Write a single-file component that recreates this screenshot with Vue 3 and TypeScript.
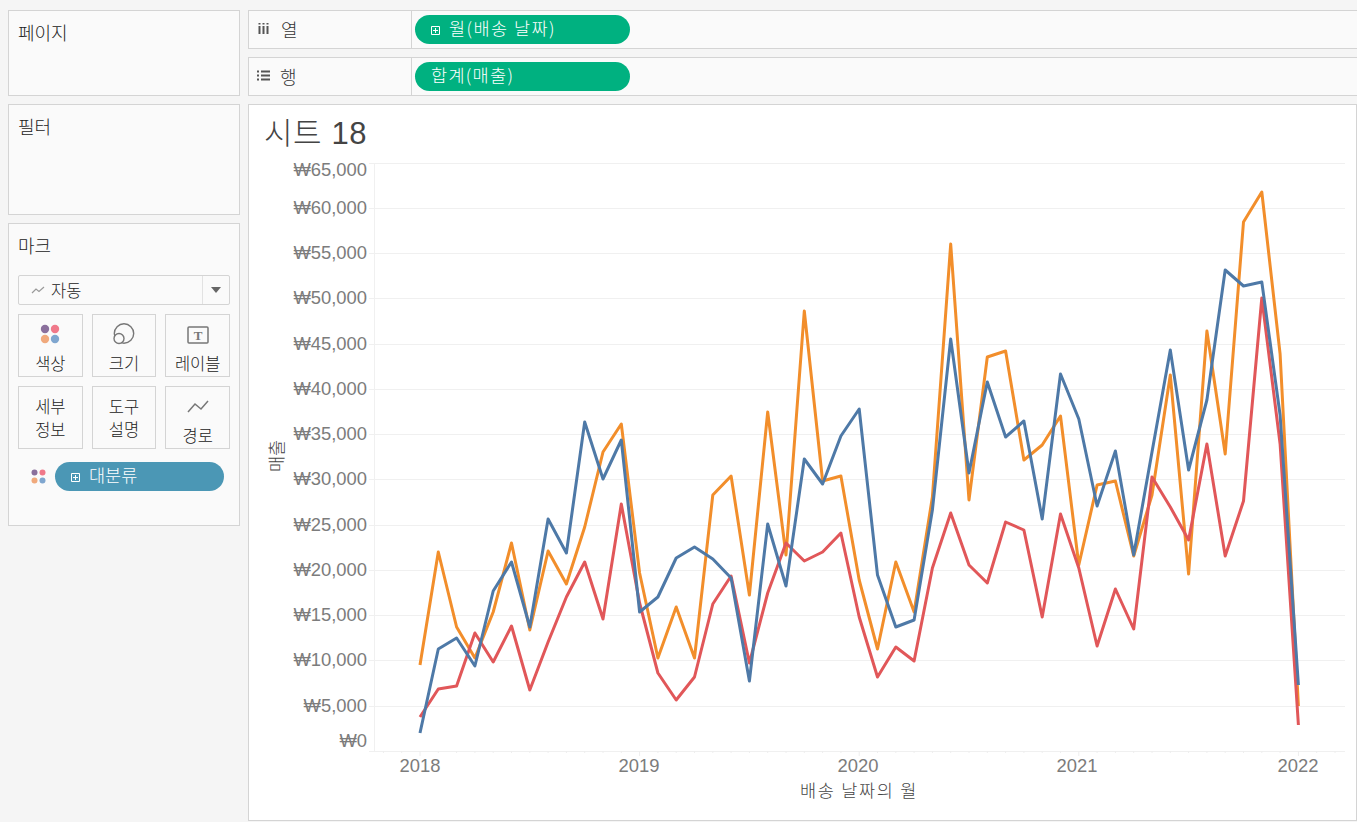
<script setup lang="ts">
const xs: number[] = Array.from({ length: 49 }, (_, i) => 420 + i * 18.3)
const orangeY = [665,552,627,658,612,543,630,551,584,527,452,424,573,658,607,658,495,476,595,412,555,311,481,476,580,649,562,612,497,244,500,357,351,460,445,416,565,485,481,556,495,375,574,331,454,222,192,354,706]
const blueY = [733,649,638,666,591,562,627,519,553,422,479,440,612,597,558,547,559,578,681,524,586,459,484,436,409,575,627,620,510,339,473,382,437,421,519,374,419,506,451,555,452,350,470,400,270,286,282,415,685]
const redY = [717,689,686,633,662,626,690,642,597,562,619,504,603,673,700,677,604,576,663,593,543,561,552,533,617,677,647,661,568,513,565,583,522,530,617,514,568,646,589,629,477,507,540,444,556,501,298,444,725]
const pts = (ys: number[]): string => ys.map((y, i) => `${xs[i].toFixed(1)},${y}`).join(' ')
const series = [
  { color: '#f28e2b', points: pts(orangeY) },
  { color: '#e15759', points: pts(redY) },
  { color: '#4e79a7', points: pts(blueY) },
]
const gridYs = [163, 208, 253, 298, 344, 389, 434, 479, 525, 570, 615, 660, 706, 751]
const yLabels = [
  { t: '₩65,000', y: 170 }, { t: '₩60,000', y: 208 }, { t: '₩55,000', y: 253 }, { t: '₩50,000', y: 298 },
  { t: '₩45,000', y: 344 }, { t: '₩40,000', y: 389 }, { t: '₩35,000', y: 434 }, { t: '₩30,000', y: 479 },
  { t: '₩25,000', y: 525 }, { t: '₩20,000', y: 570 }, { t: '₩15,000', y: 615 }, { t: '₩10,000', y: 660 },
  { t: '₩5,000', y: 706 }, { t: '₩0', y: 741 },
]
const xLabels = [
  { t: '2018', x: 420 }, { t: '2019', x: 639 }, { t: '2020', x: 858 }, { t: '2021', x: 1077 }, { t: '2022', x: 1298 },
]
const ticks: { x: number; len: number }[] = Array.from({ length: 53 }, (_, i) => {
  const m = i - 2
  return { x: 420 + m * 18.3, len: m % 12 === 0 ? 5 : 2 }
})
</script>

<template>
  <div class="app">
    <aside class="side">
      <section class="card pages"><h3>페이지</h3></section>
      <section class="card filters"><h3>필터</h3></section>
      <section class="card marks">
        <h3>마크</h3>
        <div class="select">
          <span class="sel-main">
            <svg width="16" height="10" viewBox="0 0 16 10"><path d="M1 8 L5 4 L8 6.5 L13 2" fill="none" stroke="#9a9a9a" stroke-width="1.2"/></svg>
            자동
          </span>
          <span class="sel-arrow"><i></i></span>
        </div>
        <div class="btns">
          <div class="btn">
            <svg class="ico" width="22" height="22" viewBox="0 0 22 22">
              <circle cx="6" cy="6" r="4.2" fill="#8a6f9c"/><circle cx="16" cy="6" r="4.2" fill="#f0798a"/>
              <circle cx="6" cy="16" r="4.2" fill="#f0a97c"/><circle cx="16" cy="16" r="4.2" fill="#7fa6cf"/>
            </svg>
            <span>색상</span>
          </div>
          <div class="btn">
            <svg class="ico" width="22" height="22" viewBox="0 0 22 22">
              <circle cx="11" cy="10.5" r="9.7" fill="none" stroke="#777" stroke-width="1.4"/>
              <circle cx="6" cy="15.5" r="5" fill="#fafafa" stroke="#777" stroke-width="1.4"/>
            </svg>
            <span>크기</span>
          </div>
          <div class="btn">
            <svg class="ico" width="22" height="20" viewBox="0 0 22 20">
              <rect x="1" y="2" width="20" height="16" rx="1" fill="none" stroke="#777" stroke-width="1.5"/>
              <text x="11" y="14.5" text-anchor="middle" class="t-ico">T</text>
            </svg>
            <span>레이블</span>
          </div>
          <div class="btn two"><span>세부<br />정보</span></div>
          <div class="btn two"><span>도구<br />설명</span></div>
          <div class="btn path">
            <svg class="ico" width="22" height="14" viewBox="0 0 22 14">
              <path d="M1 12 L8 4 L14 9 L21 1" fill="none" stroke="#777" stroke-width="1.5"/>
            </svg>
            <span>경로</span>
          </div>
        </div>
        <div class="color-row">
          <svg width="15" height="15" viewBox="0 0 15 15">
            <circle cx="3.5" cy="3.5" r="3" fill="#8a6f9c"/><circle cx="11.5" cy="3.5" r="3" fill="#f0798a"/>
            <circle cx="3.5" cy="11.5" r="3" fill="#f0a97c"/><circle cx="11.5" cy="11.5" r="3" fill="#7fa6cf"/>
          </svg>
          <div class="pill blue">
            <svg class="plus" width="9" height="9" viewBox="0 0 9 9"><path d="M.5.5h8v8h-8zM2 4.5h5M4.5 2v5" fill="none" stroke="#fff" stroke-width="1"/></svg>
            대분류
          </div>
        </div>
      </section>
    </aside>
    <main class="main">
      <div class="shelf">
        <div class="shelf-label">
          <svg width="11" height="11" viewBox="0 0 11 11"><path d="M1.5 3v8M5.5 3v8M9.5 3v8M1.5 0v1.6M5.5 0v1.6M9.5 0v1.6" stroke="#555" stroke-width="2" fill="none"/></svg>
          <span>열</span>
        </div>
        <div class="shelf-body">
          <div class="pill green date">
            <svg class="plus" width="9" height="9" viewBox="0 0 9 9"><path d="M.5.5h8v8h-8zM2 4.5h5M4.5 2v5" fill="none" stroke="#fff" stroke-width="1"/></svg>
            월(배송 날짜)
          </div>
        </div>
      </div>
      <div class="shelf">
        <div class="shelf-label rows">
          <svg width="13" height="11" viewBox="0 0 13 11"><path d="M0 1.5h2M4 1.5h9M0 5.5h2M4 5.5h9M0 9.5h2M4 9.5h9" stroke="#555" stroke-width="2" fill="none"/></svg>
          <span>행</span>
        </div>
        <div class="shelf-body">
          <div class="pill green sum">합계(매출)</div>
        </div>
      </div>
      <section class="view">
        <h1 class="title">시트 18</h1>
        <svg class="chart" viewBox="249 150 1107 670" width="1107" height="670">
          <line x1="374.5" x2="374.5" y1="163" y2="751" class="grid" />
          <line v-for="y in gridYs" :key="y" x1="369" x2="1345" :y1="y + 0.5" :y2="y + 0.5" class="grid" />
          <line v-for="t in ticks" :key="t.x" :x1="t.x" :x2="t.x" y1="751" :y2="751 + t.len" class="tick" />
          <polyline v-for="s in series" :key="s.color" :points="s.points" fill="none" :stroke="s.color" stroke-width="3" stroke-linejoin="round" />
          <text v-for="l in yLabels" :key="l.t" x="367" :y="l.y + 6" text-anchor="end" class="axis y">{{ l.t }}</text>
          <text v-for="l in xLabels" :key="l.t" :x="l.x" y="772" text-anchor="middle" class="axis">{{ l.t }}</text>
          <text x="859" y="797" text-anchor="middle" class="axis-title x">배송 날짜의 월</text>
          <text transform="translate(283 456) rotate(-90)" text-anchor="middle" class="axis-title">매출</text>
        </svg>
      </section>
    </main>
  </div>
</template>

<style>
html, body { margin: 0; background: #f5f5f5; overflow: hidden; }
</style>

<style scoped>
.app {
  display: grid;
  grid-template-columns: 232px 1109px;
  column-gap: 8px;
  width: 1357px;
  height: 822px;
  box-sizing: border-box;
  padding: 10px 0 0 8px;
  background: #f5f5f5;
  font-family: "Noto Sans CJK KR", "Noto Sans", sans-serif;
  font-weight: 300;
  color: #222;
  overflow: hidden;
}
.side, .main { display: flex; flex-direction: column; gap: 8px; }
.card {
  box-sizing: border-box;
  background: #fafafa;
  border: 1px solid #d4d4d4;
  padding: 9px 9px;
}
.card h3 { margin: 0; font-size: 18px; font-weight: 300; line-height: 25px; color: #222; }
.pages { height: 86px; }
.filters { height: 111px; }
.marks { height: 303px; }
.select {
  display: flex;
  height: 30px;
  margin-top: 17px;
  box-sizing: border-box;
  border: 1px solid #d4d4d4;
  border-radius: 2px;
  font-size: 16.5px;
}
.sel-main { flex: 1; display: flex; align-items: center; gap: 4px; padding-left: 12px; }
.sel-arrow { width: 26px; border-left: 1px solid #e2e2e2; display: flex; align-items: center; justify-content: center; }
.sel-arrow i { width: 0; height: 0; border: 5px solid transparent; border-top: 6px solid #666; border-bottom: 0; }
.btns { display: grid; grid-template-columns: repeat(3, 1fr); gap: 9px; margin-top: 9px; }
.btn {
  box-sizing: border-box;
  height: 63px;
  border: 1px solid #d4d4d4;
  display: flex;
  flex-direction: column;
  align-items: center;
  justify-content: flex-end;
  text-align: center;
  font-size: 16.5px;
  line-height: 23px;
  padding-bottom: 1px;
}
.btn .ico { margin-bottom: 7px; }
.btn.two { justify-content: center; padding-bottom: 0; }
.btn.path .ico { margin-bottom: 10px; }
.t-ico { font-family: "Liberation Serif", serif; font-size: 13px; font-weight: 700; fill: #777; }
.color-row { display: flex; align-items: center; gap: 9px; margin-top: 13px; padding-left: 13px; }
.pill {
  box-sizing: border-box;
  height: 29px;
  border-radius: 15px;
  color: #fff;
  font-size: 17.5px;
  line-height: 26px;
  display: flex;
  align-items: flex-start;
  gap: 9px;
  padding-left: 16px;
}
.plus { margin-top: 11px; flex: none; }
.blue { background: #4b97b5; width: 169px; }
.green { background: #00b180; width: 215px; }
.date { letter-spacing: 1.45px; }
.sum { padding-left: 16px; letter-spacing: 1.3px; }
.shelf {
  display: flex;
  height: 39px;
  margin-right: -2px;
  box-sizing: border-box;
  background: #fafafa;
  border: 1px solid #d4d4d4;
}
.shelf-label {
  box-sizing: border-box;
  width: 163px;
  border-right: 1px solid #d4d4d4;
  display: flex;
  align-items: center;
  gap: 12px;
  padding-left: 9px;
  padding-bottom: 2px;
  font-size: 18px;
  color: #333;
}
.shelf-label.rows { gap: 10px; padding-left: 8px; }
.shelf-body { padding: 4px 0 0 3px; }
.view {
  height: 717px;
  box-sizing: border-box;
  background: #fff;
  border: 1px solid #d4d4d4;
  display: flex;
  flex-direction: column;
}
.title {
  margin: 0;
  height: 45px;
  box-sizing: border-box;
  padding-left: 15px;
  font-family: "Liberation Sans", "Noto Sans CJK KR", sans-serif;
  font-size: 31px;
  font-weight: 300;
  letter-spacing: .6px;
  line-height: 57px;
  color: #444;
}
.chart { display: block; }
.grid { stroke: #f0f0f0; stroke-width: 1; }
.tick { stroke: #eeeeee; stroke-width: 1; }
.axis { font-family: "Liberation Sans", "Noto Sans CJK KR", sans-serif; font-size: 18.4px; fill: #7c7c7c; }
.axis-title { font-family: "Noto Sans CJK KR", sans-serif; font-size: 17.5px; font-weight: 300; fill: #444; }
.axis-title.x { letter-spacing: 1.7px; }
</style>
